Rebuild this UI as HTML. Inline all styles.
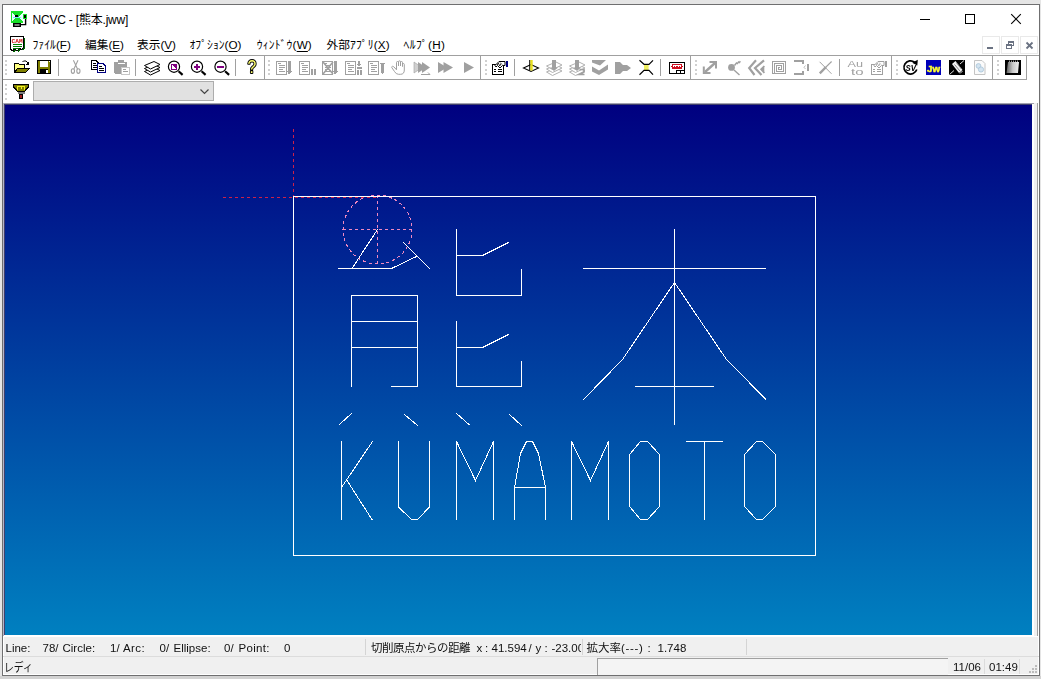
<!DOCTYPE html>
<html lang="ja"><head><meta charset="utf-8"><title>NCVC - [熊本.jww]</title>
<style>
html,body{margin:0;padding:0;}
body{width:1041px;height:679px;overflow:hidden;background:#e5e5e5;position:relative;
 font-family:"Liberation Sans","Noto Sans CJK JP",sans-serif;color:#000;}
.a{position:absolute;}
.t{position:absolute;white-space:pre;line-height:16px;height:16px;}
#win{left:2px;top:4px;width:1036px;height:670px;border:1px solid #6f6f70;background:#fff;}
#sb{left:4px;top:637px;width:1034px;height:37px;background:#f0f0f0;}
.sb{font-size:11.5px;color:#111;}
.mn{font-size:11.7px;color:#000;}
.hl{position:absolute;height:1px;}
.vl{position:absolute;width:1px;}
.gd{position:absolute;width:2px;height:2px;background:#d0d0d0;}
svg{position:absolute;overflow:visible;}
u{text-decoration:underline;text-underline-offset:1.5px;text-decoration-thickness:1px;}
</style></head>
<body>
<div class="a" style="left:0;top:676px;width:1041px;height:3px;background:#d2d2d2"></div>
<div class="a" id="win"></div>
<div class="t" style="left:32.5px;top:12px;font-size:12px;letter-spacing:-0.2px">NCVC - [熊本.jww]</div>
<svg style="left:0;top:0" width="1041" height="60" shape-rendering="crispEdges"><line x1="920" y1="19.5" x2="930" y2="19.5" stroke="#000"/><rect x="965.5" y="14.5" width="9" height="9" fill="none" stroke="#000"/><g shape-rendering="auto" stroke="#000" stroke-width="1.1"><line x1="1011.2" y1="14.2" x2="1020.8" y2="23.8"/><line x1="1020.8" y1="14.2" x2="1011.2" y2="23.8"/></g></svg>
<div class="t mn" style="left:32.5px;top:37px">ﾌｧｲﾙ(<u>F</u>)</div>
<div class="t mn" style="left:85.0px;top:37px">編集(<u>E</u>)</div>
<div class="t mn" style="left:137.0px;top:37px">表示(<u>V</u>)</div>
<div class="t mn" style="left:189.5px;top:37px">ｵﾌﾟｼｮﾝ(<u>O</u>)</div>
<div class="t mn" style="left:256.8px;top:37px"><span style="letter-spacing:.15px">ｳｨﾝﾄﾞｳ(<u>W</u>)</span></div>
<div class="t mn" style="left:326.5px;top:37px"><span style="letter-spacing:.1px">外部ｱﾌﾟﾘ(<u>X</u>)</span></div>
<div class="t mn" style="left:403.5px;top:37px"><span style="letter-spacing:.35px">ﾍﾙﾌﾟ(<u>H</u>)</span></div>
<div class="a" style="left:982px;top:36px;width:16px;height:16px;border:1px solid #e9e9e9;background:#fff"></div>
<div class="a" style="left:1001px;top:36px;width:16px;height:16px;border:1px solid #e9e9e9;background:#fff"></div>
<div class="a" style="left:1020px;top:36px;width:16px;height:16px;border:1px solid #e9e9e9;background:#fff"></div>
<svg style="left:0;top:0" width="1041" height="60"><rect x="987" y="47" width="6" height="2" fill="#6a7282" shape-rendering="crispEdges"/><g fill="none" stroke="#6a7282" shape-rendering="crispEdges"><rect x="1008.5" y="41.5" width="5" height="4"/><rect x="1006.5" y="44.5" width="5" height="4" fill="#fff"/><line x1="1008" y1="42" x2="1014" y2="42"/><line x1="1006" y1="45" x2="1012" y2="45"/></g><g stroke="#6a7282" stroke-width="1.8"><line x1="1026.5" y1="42.5" x2="1032.5" y2="48.5"/><line x1="1032.5" y1="42.5" x2="1026.5" y2="48.5"/></g></svg>
<div class="hl" style="left:3px;top:55px;width:1036px;background:#a0a0a0"></div>
<div class="hl" style="left:3px;top:79px;width:1024px;background:#a0a0a0"></div>
<div class="vl" style="left:264px;top:56px;height:23px;background:#a0a0a0"></div>
<div class="vl" style="left:480px;top:56px;height:23px;background:#a0a0a0"></div>
<div class="vl" style="left:690px;top:56px;height:23px;background:#a0a0a0"></div>
<div class="vl" style="left:891px;top:56px;height:23px;background:#a0a0a0"></div>
<div class="vl" style="left:992px;top:56px;height:23px;background:#a0a0a0"></div>
<div class="vl" style="left:1026px;top:56px;height:23px;background:#a0a0a0"></div>
<div class="vl" style="left:58px;top:59px;height:17px;background:#a0a0a0"></div>
<div class="vl" style="left:135px;top:59px;height:17px;background:#a0a0a0"></div>
<div class="vl" style="left:235px;top:59px;height:17px;background:#a0a0a0"></div>
<div class="vl" style="left:514px;top:59px;height:17px;background:#a0a0a0"></div>
<div class="vl" style="left:660px;top:59px;height:17px;background:#a0a0a0"></div>
<div class="vl" style="left:839px;top:59px;height:17px;background:#a0a0a0"></div>
<div class="gd" style="left:5px;top:60px"></div><div class="gd" style="left:5px;top:64px"></div><div class="gd" style="left:5px;top:69px"></div><div class="gd" style="left:5px;top:73px"></div><div class="gd" style="left:268px;top:60px"></div><div class="gd" style="left:268px;top:64px"></div><div class="gd" style="left:268px;top:69px"></div><div class="gd" style="left:268px;top:73px"></div><div class="gd" style="left:485px;top:60px"></div><div class="gd" style="left:485px;top:64px"></div><div class="gd" style="left:485px;top:69px"></div><div class="gd" style="left:485px;top:73px"></div><div class="gd" style="left:695px;top:60px"></div><div class="gd" style="left:695px;top:64px"></div><div class="gd" style="left:695px;top:69px"></div><div class="gd" style="left:695px;top:73px"></div><div class="gd" style="left:896px;top:60px"></div><div class="gd" style="left:896px;top:64px"></div><div class="gd" style="left:896px;top:69px"></div><div class="gd" style="left:896px;top:73px"></div><div class="gd" style="left:997px;top:60px"></div><div class="gd" style="left:997px;top:64px"></div><div class="gd" style="left:997px;top:69px"></div><div class="gd" style="left:997px;top:73px"></div>
<div class="gd" style="left:5px;top:84px"></div><div class="gd" style="left:5px;top:88px"></div><div class="gd" style="left:5px;top:93px"></div><div class="gd" style="left:5px;top:98px"></div>
<svg style="left:0;top:0;will-change:transform" width="1041" height="110" shape-rendering="crispEdges">
<g><rect x="11" y="11" width="12" height="12" fill="#18e028"/><rect x="23" y="14" width="4" height="5" fill="#18e028"/><polygon points="12,13 16.5,17 12,21" fill="#e8ffff"/><polygon points="22.5,13 18,17 22.5,21" fill="#e8ffff"/><rect x="15" y="15" width="3" height="2" fill="#000"/><rect x="13" y="17" width="8" height="1" fill="#80e0ff"/><rect x="24" y="15" width="2" height="3" fill="#000"/><rect x="13.75" y="23.75" width="6.5" height="2.5" fill="#fff" stroke="#000" stroke-width="1.5" shape-rendering="auto"/><path d="M20.5,24.6H25.6V19" stroke="#000" stroke-width="1.4" fill="none" shape-rendering="auto"/></g>
<g><polygon points="12,38 25,38 25,48 23,50 21,49 19,52 16,50 14,52 12,51" fill="#006000"/><polygon points="10.5,36.5 23.5,36.5 23.5,47.5 21.5,49.5 19.5,48.5 17.5,50.5 14.5,49.5 12.5,50.5 10.5,49.5" fill="#fff" stroke="#000"/><text x="11.6" y="42.6" font-family="Liberation Mono,monospace" font-weight="bold" font-size="6.2" fill="#d01010" textLength="11" lengthAdjust="spacingAndGlyphs">CAM</text><path d="M13,44.5h9 M13,46.5h9 M13,48.5h6" stroke="#008000" fill="none"/></g>
<g><polygon points="14.5,72.5 14.5,63.5 18.5,63.5 19.5,64.5 24.5,64.5 24.5,68 17.5,68" fill="#ffff80" stroke="#000"/><polygon points="17.5,68.5 29.5,68.5 25.5,72.5 14.5,72.5" fill="#808000" stroke="#000"/><path d="M22.5,62 L23.5,61 H26 L28,63" stroke="#000" fill="none" shape-rendering="auto"/><polygon points="26,64.5 29,64.5 29,61.5" fill="#000"/></g>
<g><rect x="37.5" y="60.5" width="13" height="13" fill="#808000" stroke="#000"/><rect x="40" y="61" width="8" height="6" fill="#fff"/><rect x="40" y="69" width="8" height="4.5" fill="#000"/><rect x="46" y="70" width="1.6" height="3" fill="#fff"/><rect x="49" y="61" width="1" height="1" fill="#fff"/></g>
<g shape-rendering="auto" stroke="#a0a0a0" fill="none" stroke-width="1.1"><path d="M73.4,60.2L77.5,69 M78,60.2L73.9,69"/><ellipse cx="72.9" cy="71.1" rx="1.6" ry="2.3"/><ellipse cx="78.4" cy="71.1" rx="1.6" ry="2.3"/></g>
<g><polygon points="91.5,60.5 96,60.5 98.5,63 98.5,69.5 91.5,69.5" fill="#fff" stroke="#000" stroke-width="1.3"/><path d="M93,63.5h3 M93,65.5h4 M93,67.5h4" stroke="#000"/><polygon points="97.5,63.5 103,63.5 105.5,66 105.5,72.5 97.5,72.5" fill="#fff" stroke="#000080" stroke-width="1.3"/><path d="M99,66.5h3 M99,68.5h5 M99,70.5h5" stroke="#000"/></g>
<g><rect x="114" y="62" width="13" height="11.5" rx="1" fill="#a0a0a0"/><rect x="118" y="60" width="6" height="3" fill="#a0a0a0"/><rect x="117.5" y="63" width="7" height="1" fill="#fff"/><rect x="121" y="67" width="8" height="7" fill="#fff" stroke="#a0a0a0" stroke-width=".6"/><path d="M122.5,69.5h3 M122.5,71.5h5" stroke="#a0a0a0"/></g>
<g shape-rendering="auto"><polygon points="144.5,71.5 154,67.5 160,70.5 150.5,75" fill="#fff" stroke="#000" stroke-width="1"/><polygon points="144.5,68.5 154,64.5 160,67.5 150.5,72" fill="#fff" stroke="#000" stroke-width="1"/><polygon points="144.5,65.5 154,61.5 160,64.5 150.5,69" fill="#fff" stroke="#000" stroke-width="1"/></g>
<g shape-rendering="auto"><circle cx="174" cy="66.7" r="5.6" fill="#fff" stroke="#000" stroke-width="1.2"/><line x1="178.6" y1="71.3" x2="182.6" y2="74.9" stroke="#000" stroke-width="2.2"/></g><rect x="171" y="64" width="6" height="6" fill="#800080"/><polygon points="172,65 176,69 172,69" fill="#fff"/>
<g shape-rendering="auto"><circle cx="197" cy="66.7" r="5.6" fill="#fff" stroke="#000" stroke-width="1.2"/><line x1="201.6" y1="71.3" x2="205.6" y2="74.9" stroke="#000" stroke-width="2.2"/></g><rect x="194" y="65.7" width="6.4" height="2" fill="#800080"/><rect x="196.2" y="63.5" width="2" height="6.4" fill="#800080"/>
<g shape-rendering="auto"><circle cx="220.5" cy="66.7" r="5.6" fill="#fff" stroke="#000" stroke-width="1.2"/><line x1="225.1" y1="71.3" x2="229.1" y2="74.9" stroke="#000" stroke-width="2.2"/></g><rect x="217.4" y="65.7" width="6.4" height="2" fill="#800080"/>
<text x="247.6" y="73.2" font-family="Liberation Sans,sans-serif" font-size="17.5" fill="#ffff70" stroke="#000" stroke-width="2.1" stroke-linejoin="round" paint-order="stroke" shape-rendering="auto" textLength="8.8" lengthAdjust="spacingAndGlyphs">?</text>
<g><rect x="276.5" y="61.5" width="10" height="13" fill="#fff" stroke="#a0a0a0"/><path d="M278,63.5h3 M279,65.5h6 M279,67.5h6 M279,69.5h4 M279,71.5h6" stroke="#a0a0a0" fill="none"/><rect x="288" y="61" width="2.5" height="10" fill="#a0a0a0"/><polygon points="286.5,71 292,71 289.3,74.5" fill="#a0a0a0"/></g>
<g><rect x="299.5" y="61.5" width="10" height="13" fill="#fff" stroke="#a0a0a0"/><path d="M301,63.5h3 M302,65.5h6 M302,67.5h6 M302,69.5h4 M302,71.5h6" stroke="#a0a0a0" fill="none"/><rect x="311" y="69" width="2" height="5.5" fill="#a0a0a0"/><rect x="314" y="69" width="2" height="5.5" fill="#a0a0a0"/></g>
<g><rect x="322.5" y="61.5" width="10" height="13" fill="#fff" stroke="#a0a0a0"/><path d="M324,63.5h3 M325,65.5h6 M325,67.5h6 M325,69.5h4 M325,71.5h6" stroke="#a0a0a0" fill="none"/><path d="M323,62L333,74 M323,74L333,62" stroke="#a0a0a0" stroke-width="1.6" shape-rendering="auto"/><rect x="334" y="61" width="2.5" height="10" fill="#a0a0a0"/><polygon points="332.5,71 338,71 335.3,74.5" fill="#a0a0a0"/></g>
<g><rect x="345.5" y="61.5" width="10" height="13" fill="#fff" stroke="#a0a0a0"/><path d="M347,63.5h3 M348,65.5h6 M348,67.5h6 M348,69.5h4 M348,71.5h6" stroke="#a0a0a0" fill="none"/><rect x="358" y="61" width="2" height="3" fill="#a0a0a0"/><polygon points="356.5,64 361.5,64 359,66.5" fill="#a0a0a0"/><rect x="356.5" y="67" width="5" height="1.5" fill="#a0a0a0"/><rect x="357" y="70" width="1.6" height="4.5" fill="#a0a0a0"/><rect x="360" y="70" width="1.6" height="4.5" fill="#a0a0a0"/></g>
<g><rect x="368.5" y="61.5" width="10" height="13" fill="#fff" stroke="#a0a0a0"/><path d="M370,63.5h3 M371,65.5h6 M371,67.5h6 M371,69.5h4 M371,71.5h6" stroke="#a0a0a0" fill="none"/><rect x="380" y="62.5" width="5" height="1.8" fill="#a0a0a0"/><rect x="381.3" y="64" width="2.4" height="8" fill="#a0a0a0"/><polygon points="380,71.5 385,71.5 382.5,74.5" fill="#a0a0a0"/></g>
<path shape-rendering="auto" d="M396.5,67 V62.5 Q396.5,61.5 397.5,61.5 Q398.5,61.5 398.5,62.5 V66 V61.8 Q398.5,60.8 399.5,60.8 Q400.5,60.8 400.5,61.8 V66 V62.5 Q400.5,61.5 401.5,61.5 Q402.5,61.5 402.5,62.5 V66.5 V64.5 Q402.5,63.5 403.4,63.5 Q404.3,63.5 404.3,64.5 V70 Q404.3,74.3 400.5,74.3 H398.5 Q396,74.3 394.5,71.5 L391.8,67.6 Q391.4,66.6 392.4,66.3 Q393.3,66.2 394,67 L396.5,69.8 Z" fill="#fff" stroke="#a0a0a0" stroke-width="1"/>
<g shape-rendering="auto" fill="#a0a0a0"><polygon points="414,62 422,67.5 414,73" fill="#d0d0d0" stroke="#a0a0a0" stroke-width=".6"/><polygon points="418,62 426,67.5 418,73"/><polygon points="422,62 430,67.5 422,73"/><path d="M421,74.5H430 M430,74.5l-2,-2" stroke="#a0a0a0" fill="none"/></g>
<g shape-rendering="auto" fill="#a0a0a0"><polygon points="438,62 447,67.5 438,73"/><polygon points="443.5,62 453,67.5 443.5,73"/></g>
<polygon shape-rendering="auto" points="464,62 474,67.5 464,73" fill="#a0a0a0"/>
<g><rect x="492.5" y="64.5" width="11" height="10" fill="#fff" stroke="#000" stroke-width="1.3"/><path d="M494,69.5h2 M497.5,69.5h4.5 M494,71.5h2 M497.5,71.5h4.5" stroke="#000" fill="none"/><polygon points="495,65.5 499,61.5 505,61.5 505,65.5 502.5,65.5 500,68 497.5,65.5 496,67" fill="#fff" stroke="#000" stroke-width="1" shape-rendering="auto"/><path d="M497,65l2,-2 M499,66l2,-2 M498,63.5l2.5,2.5 M500,62.5l2,2" stroke="#000" stroke-width=".8" fill="none" shape-rendering="auto"/><rect x="505.5" y="61" width="2.5" height="5.5" fill="#000080"/></g>
<g shape-rendering="auto"><polygon points="523.5,68 531,64.5 538.5,68 531,71.5" fill="#fff" stroke="#000" stroke-width="1.1"/><rect x="529.2" y="60" width="1.2" height="10.5" fill="#000"/><rect x="530.3" y="60" width="2.4" height="10.5" fill="#e8e020"/></g>
<g shape-rendering="auto"><polygon points="546.5,72.0 556,68.0 562,71.0 552.5,75.5" fill="#fff" stroke="#b0b0b0" stroke-width="1"/><polygon points="546.5,69.0 556,65.0 562,68.0 552.5,72.5" fill="#fff" stroke="#b0b0b0" stroke-width="1"/><polygon points="546.5,66.0 556,62.0 562,65.0 552.5,69.5" fill="#fff" stroke="#b0b0b0" stroke-width="1"/><rect x="552" y="60" width="4" height="8" fill="#a0a0a0"/><polygon points="550,67.5 558,67.5 554,71" fill="#a0a0a0"/></g>
<g shape-rendering="auto"><polygon points="569.5,72.0 579,68.0 585,71.0 575.5,75.5" fill="#fff" stroke="#b0b0b0" stroke-width="1"/><polygon points="569.5,69.0 579,65.0 585,68.0 575.5,72.5" fill="#fff" stroke="#b0b0b0" stroke-width="1"/><polygon points="569.5,66.0 579,62.0 585,65.0 575.5,69.5" fill="#fff" stroke="#b0b0b0" stroke-width="1"/><rect x="575" y="60" width="4" height="8" fill="#a0a0a0"/><polygon points="573,67.5 581,67.5 577,71" fill="#a0a0a0"/><path d="M579.5,69.5 h4.5 v2.5 l-4.5,2.5 h5" stroke="#a0a0a0" stroke-width="1.6" fill="none"/></g>
<g shape-rendering="auto" fill="#a0a0a0"><polygon points="592,60 606,60 600,65.5 592,62.5"/><polygon points="592,66.5 599,70.5 608,64.5 608,69.5 599,75 592,71.5"/></g>
<polygon shape-rendering="auto" points="615,62 620,62 623,65 627,65 631,68 627,71 623,71 620,74 615,74" fill="#a0a0a0"/>
<g shape-rendering="auto"><rect x="644" y="64.5" width="4.6" height="5.5" fill="#f0f060"/><path d="M639.5,60.3L644,64.3H649L653,60.3 M639.5,74.7L644,70.3H649L653,74.7" stroke="#000" stroke-width="1.2" fill="none"/></g>
<g><rect x="669.5" y="62.5" width="15" height="11" fill="#fff" stroke="#000" stroke-width="1.4"/><rect x="672.5" y="64.5" width="9" height="3.6" fill="#fff" stroke="#d01020" stroke-width="1.4"/><rect x="671" y="65.5" width="1" height="1.6" fill="#d01020"/><rect x="682.3" y="65.5" width="1" height="1.6" fill="#d01020"/><path d="M674,66.5h1.2 M676.4,66.5h1.2 M678.8,66.5h1.2" stroke="#d01020"/><rect x="676.5" y="70.5" width="3.5" height="3" fill="#fff" stroke="#000"/><rect x="680.5" y="70.5" width="3.5" height="3" fill="#fff" stroke="#000"/></g>
<g shape-rendering="auto" stroke="#a0a0a0" fill="none"><path d="M705,72L715,63" stroke-width="2.4"/><path d="M709.5,62H716V68.5 M703.8,66.5V73H710.5" stroke-width="2"/></g>
<g shape-rendering="auto"><circle cx="731.5" cy="67.4" r="3.4" fill="#a0a0a0"/><path d="M734.5,65.5L736.5,63 l1,.6 l1,-1.6 l1,.6 l.8,-1.4 M734,70L739.5,75" stroke="#a0a0a0" stroke-width="1.4" fill="none"/></g>
<g shape-rendering="auto" stroke="#a0a0a0" fill="none" stroke-width="2.2"><path d="M756,60.3L749.2,68L754.5,75"/><path d="M764,60.3L755,68L761.5,75"/><path d="M764.3,66L761,69.3L764.3,73" stroke-width="1.6" fill="#a0a0a0"/></g>
<g stroke="#a0a0a0" fill="none"><rect x="772.5" y="61.5" width="13" height="12"/><path d="M774.5,73.5V63.5H783.5V71.5H776.5V65.5H781.5V69.5H778.5V67.5H780"/></g>
<g stroke="#a0a0a0" fill="none"><path d="M794,61.3H803V64" stroke-width="1.8"/><path d="M794,73.7H803V71" stroke-width="1.8"/><rect x="807" y="64" width="2" height="7" fill="#a0a0a0" stroke="none"/><path d="M805.5,65.5L804,67.3L805.5,69" stroke-width=".7" shape-rendering="auto"/></g>
<g shape-rendering="auto" stroke="#a0a0a0" fill="none"><path d="M819.6,61.8L831.5,73.8" stroke-width="1"/><path d="M831.6,61.5L826,67" stroke-width="1.1"/><path d="M826,67L819.8,73.3" stroke-width="2.4"/></g>
<g shape-rendering="auto" font-family="Liberation Sans,sans-serif" font-size="9.5" fill="#a0a0a0"><text x="847.6" y="66.6" textLength="15.5" lengthAdjust="spacingAndGlyphs">Au</text><text x="851" y="74.6" textLength="12.5" lengthAdjust="spacingAndGlyphs">to</text></g>
<g><rect x="871.5" y="64.5" width="11" height="10" fill="#fff" stroke="#a0a0a0" stroke-width="1.3"/><path d="M873,69.5h2 M876.5,69.5h4.5 M873,71.5h2 M876.5,71.5h4.5" stroke="#a0a0a0" fill="none"/><polygon points="874,65.5 878,61.5 884,61.5 884,65.5 881.5,65.5 879,68 876.5,65.5 875,67" fill="#fff" stroke="#a0a0a0" stroke-width="1" shape-rendering="auto"/><path d="M876,65l2,-2 M878,66l2,-2 M877,63.5l2.5,2.5 M879,62.5l2,2" stroke="#a0a0a0" stroke-width=".8" fill="none" shape-rendering="auto"/><rect x="884.5" y="61" width="2.5" height="5.5" fill="#a0a0a0"/></g>
<g shape-rendering="auto"><path d="M914.6,62.2 A6.6,6.6 0 1 0 916.8,69.5" fill="none" stroke="#000" stroke-width="1.7"/><polygon points="912.2,62.8 917.8,59.8 917.3,65.6" fill="#000"/><text x="905.6" y="70.6" font-family="Liberation Sans,sans-serif" font-style="italic" font-weight="bold" font-size="8.5" fill="#000" textLength="10.5" lengthAdjust="spacingAndGlyphs">SV</text></g>
<g shape-rendering="auto"><rect x="926" y="60" width="15" height="15" fill="#0000b8" shape-rendering="crispEdges"/><text x="927" y="72" font-family="Liberation Sans,sans-serif" font-weight="bold" font-size="9.5" fill="#ffff30" stroke="#ffff30" stroke-width=".5" textLength="13" lengthAdjust="spacingAndGlyphs">Jw</text></g>
<g shape-rendering="auto"><rect x="949" y="60" width="16" height="15" fill="#000" shape-rendering="crispEdges"/><polygon points="952,64 955.5,61 962.5,70 959,73" fill="#f4f4f4"/><path d="M954.5,64.5l5.5,6.5 M956.5,62.8l5,6.3" stroke="#666" stroke-width=".8"/><path d="M960,64L964,60.5 M949.5,74.5L954,70.5 M960,73.5l2.5,-2.5" stroke="#ddd" stroke-width="1"/></g>
<g shape-rendering="auto"><polygon points="974.5,60.5 982,60.5 985,63.5 985,74.5 974.5,74.5" fill="#fbfbfb" stroke="#c4c4c4"/><circle cx="978.5" cy="66" r="2.4" fill="#d4e4f0" stroke="#a8c4d8" stroke-width=".8"/><circle cx="981" cy="69.5" r="2.6" fill="#d4e4f0" stroke="#a8c4d8" stroke-width=".8"/></g>
<defs><linearGradient id="nb" x1="0" y1="0" x2="1" y2="0"><stop offset="0" stop-color="#606060"/><stop offset=".5" stop-color="#c8c8c8"/><stop offset="1" stop-color="#f0f0f0"/></linearGradient></defs><g shape-rendering="auto"><rect x="1005" y="60" width="16" height="15" fill="#000" shape-rendering="crispEdges"/><polygon points="1008,62 1019,62 1018,73 1006.5,73" fill="url(#nb)"/><path d="M1009,61.2h9" stroke="#ddd" stroke-dasharray="1 1"/></g>
<g><polygon points="13.5,84.5 28.5,84.5 28.5,87 24.5,91.5 17.5,91.5 13.5,87" fill="#808000" stroke="#000" stroke-width="1.2"/><path d="M17.5,90V86.5H24.5V90 M21,86.5V89" stroke="#f0f020" stroke-width="1" fill="none"/><rect x="18" y="92" width="6" height="1.8" fill="#fff" stroke="#000" stroke-width=".5"/><rect x="19.5" y="94" width="3" height="4.3" fill="#a02020" stroke="#000" stroke-width="1"/></g>
</svg>
<div class="a" style="left:33px;top:81px;width:179px;height:18px;border:1px solid #adadad;background:#e1e1e1"></div>
<svg style="left:199px;top:88px" width="12" height="8"><polyline points="1.5,1.5 5.5,5.5 9.5,1.5" fill="none" stroke="#444" stroke-width="1.2"/></svg>
<div class="hl" style="left:3px;top:103px;width:1031px;background:#a2a2b0"></div>
<div class="vl" style="left:3px;top:103px;height:533px;background:#b4b4c8"></div>
<div class="a" style="left:4px;top:104px;width:1028px;height:531px;background:#40406c"></div>
<div class="a" style="left:5px;top:105px;width:1027px;height:530px;background:linear-gradient(to bottom,#000080,#0080c0)"></div>
<div class="a" style="left:1034px;top:103px;width:3px;height:533px;background:#f0f0f0"></div>
<div class="vl" style="left:1037px;top:103px;height:533px;background:#a0a0a0"></div>
<svg style="left:0;top:0" width="1041" height="679" shape-rendering="crispEdges" fill="none">
<g stroke="#cc2048" stroke-dasharray="3 3"><line x1="293.5" y1="129" x2="293.5" y2="197"/><line x1="223" y1="197.5" x2="377" y2="197.5"/></g>
<g stroke="#f088c0" stroke-dasharray="3 3"><circle cx="377.5" cy="229.5" r="34.5"/><line x1="377.5" y1="195" x2="377.5" y2="264"/><line x1="343" y1="229.5" x2="412" y2="229.5"/></g>
<g stroke="#ffffff" stroke-width="1" stroke-linecap="square">
<polygon points="293.5,196.5 815.5,196.5 815.5,555.5 293.5,555.5"/>
<polyline points="377.5,229.5 352,268.5"/>
<polyline points="338.5,268.5 391.5,268.5 416.5,256.5"/>
<polyline points="403.5,242.5 429.5,268.5"/>
<polyline points="351.5,386.5 351.5,295.5 417.5,295.5 417.5,386.5 391.5,386.5"/>
<polyline points="351.5,321.5 417.5,321.5"/>
<polyline points="351.5,347.5 417.5,347.5"/>
<polyline points="456.5,229.5 456.5,295.5 521.5,295.5 521.5,269.5"/>
<polyline points="456.5,255.5 482.5,255.5 508.5,242.5"/>
<polyline points="456.5,321.5 456.5,386.5 521.5,386.5 521.5,361"/>
<polyline points="456.5,347.5 482.5,347.5 508.5,334.5"/>
<polyline points="339.5,424.5 351.5,413.5"/>
<polyline points="404.5,414.5 417.5,425.5"/>
<polyline points="456.5,413.5 469,424.5"/>
<polyline points="509.5,414.5 521.5,425.5"/>
<polyline points="674.5,229.5 674.5,424.5"/>
<polyline points="583.5,268.5 765.5,268.5"/>
<polyline points="583.5,399.5 622.5,359.5 674.5,282.5 726.5,359.5 765.5,399"/>
<polyline points="635.5,386.5 713.5,386.5"/>
<polyline points="341.5,441.5 341.5,519.5"/>
<polyline points="372.5,441.5 341.5,487.5"/>
<polyline points="347,480.5 372,519.5"/>
<polyline points="398.5,441.5 398.5,507 411.5,519.5 417.5,519.5 429.5,507 429.5,441.5"/>
<polyline points="456.5,519.5 456.5,441.5 475.5,480.5 493.5,441.5 493.5,519.5"/>
<polyline points="514.5,519.5 514.5,487.5 520.5,453.5 526.5,441.5 532.5,441.5 538.5,453.5 545.5,487.5 545.5,519.5"/>
<polyline points="514.5,487.5 545.5,487.5"/>
<polyline points="571.5,519.5 571.5,441.5 590.5,480.5 608.5,441.5 608.5,519.5"/>
<polygon points="640.5,441.5 647.5,441.5 659.5,454.5 659.5,506.5 647.5,519.5 640.5,519.5 629.5,506.5 629.5,454.5"/>
<polyline points="686.5,441.5 722.5,441.5"/>
<polyline points="704.5,441.5 704.5,519.5"/>
<polygon points="756.5,441.5 762.5,441.5 775.5,454.5 775.5,506.5 762.5,519.5 756.5,519.5 744.5,506.5 744.5,454.5"/>
</g>
</svg>
<div class="a" id="sb"></div>
<div class="hl" style="left:3px;top:656px;width:1036px;background:#dcdcdc"></div>
<div class="vl" style="left:365px;top:639px;height:16px;background:#d4d4d4"></div>
<div class="vl" style="left:582px;top:639px;height:16px;background:#d4d4d4"></div>
<div class="vl" style="left:746px;top:639px;height:16px;background:#d4d4d4"></div>
<div class="t sb" style="left:5.5px;top:640px">Line:</div><div class="t sb" style="left:42.5px;top:640px">78/</div><div class="t sb" style="left:62.5px;top:640px">Circle:</div><div class="t sb" style="left:110px;top:640px">1/</div><div class="t sb" style="left:123px;top:640px"><span style="letter-spacing:.4px">Arc:</span></div><div class="t sb" style="left:159.5px;top:640px">0/</div><div class="t sb" style="left:173.5px;top:640px">Ellipse:</div><div class="t sb" style="left:224px;top:640px">0/</div><div class="t sb" style="left:238.5px;top:640px"><span style="letter-spacing:.3px">Point:</span></div><div class="t sb" style="left:284px;top:640px">0</div>
<div class="t sb" style="left:371px;top:640px"><span style="letter-spacing:-0.5px">切削原点からの距離</span></div><div class="t sb" style="left:476.5px;top:640px">x</div><div class="t sb" style="left:485px;top:640px">:</div><div class="t sb" style="left:491.5px;top:640px">41.594</div><div class="t sb" style="left:528.5px;top:640px">/</div><div class="t sb" style="left:535.5px;top:640px">y</div><div class="t sb" style="left:544.5px;top:640px">:</div><div class="t sb" style="left:551.5px;top:640px;width:29.5px;overflow:hidden">-23.000</div>
<div class="t sb" style="left:586.5px;top:640px">拡大率<span style="letter-spacing:.7px">(---)</span></div><div class="t sb" style="left:647.5px;top:640px">:</div><div class="t sb" style="left:657.5px;top:640px">1.748</div>
<div class="t sb" style="left:3.5px;top:660px;font-size:12px;transform:scaleX(.82);transform-origin:0 0">レディ</div>
<div class="a" style="left:597px;top:658px;width:350px;height:16px;border-top:1px solid #a0a0a0;border-left:1px solid #a0a0a0;background:#f4f4f4"></div>
<div class="t sb" style="left:953px;top:659px">11/06</div>
<div class="t sb" style="left:989px;top:659px">01:49</div>
<div class="vl" style="left:984px;top:659px;height:15px;background:#dcdcdc"></div>
<div class="vl" style="left:1019px;top:659px;height:15px;background:#dcdcdc"></div>
<div class="a" style="left:1035px;top:665px;width:2px;height:2px;background:#bcbcbc"></div><div class="a" style="left:1032px;top:668px;width:2px;height:2px;background:#bcbcbc"></div><div class="a" style="left:1035px;top:668px;width:2px;height:2px;background:#bcbcbc"></div><div class="a" style="left:1029px;top:671px;width:2px;height:2px;background:#bcbcbc"></div><div class="a" style="left:1032px;top:671px;width:2px;height:2px;background:#bcbcbc"></div><div class="a" style="left:1035px;top:671px;width:2px;height:2px;background:#bcbcbc"></div>
</body></html>
